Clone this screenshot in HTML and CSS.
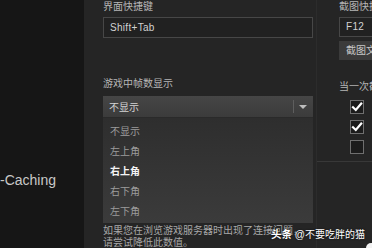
FILE: index.html
```html
<!DOCTYPE html>
<html lang="zh-CN">
<head>
  <meta charset="UTF-8" />
  <meta name="viewport" content="width=device-width, initial-scale=1.0" />
  <title>游戏内设置</title>
  <link rel="stylesheet" href="styles.css">
</head>
<body>

  <div class="page">
    <div class="sidebar">
      <div class="sidebar-item">-Caching</div>
    </div>

    <div class="content">
      <div class="col-main">
        <div class="label">界面快捷键</div>
        <div class="field">Shift+Tab</div>

        <div class="label label-gap">游戏中帧数显示</div>
        <div class="select">
          <span class="select-value">不显示</span>
          <span class="select-sep"></span>
          <span class="select-arrow"></span>
        </div>
        <ul class="options">
          <li>不显示</li>
          <li>左上角</li>
          <li class="selected">右上角</li>
          <li>右下角</li>
          <li>左下角</li>
        </ul>

        <p class="note">如果您在浏览游戏服务器时出现了连接问题，<br>请尝试降低此数值。</p>
      </div>

      <div class="col-side">
        <div class="side-inner">
          <div class="label">截图快捷键</div>
          <div class="field field-wide">F12</div>
          <div class="button">截图文件夹</div>

          <div class="label label-gap-sm">当一次截图时</div>
          <div class="checks">
            <span class="check on">
              <svg width="12" height="12" viewBox="0 0 12 12"><path d="M2 6.2 L4.8 9 L10.2 2.6" fill="none" stroke="#fff" stroke-width="2.2" stroke-linecap="square"/></svg>
            </span>
            <span class="check on">
              <svg width="12" height="12" viewBox="0 0 12 12"><path d="M2 6.2 L4.8 9 L10.2 2.6" fill="none" stroke="#fff" stroke-width="2.2" stroke-linecap="square"/></svg>
            </span>
            <span class="check"></span>
          </div>
        </div>
        <div class="side-divider"></div>
      </div>
    </div>
  </div>

  <div class="watermark"><b>头条</b> @不要吃胖的猫</div>
  <div class="corner-dot"></div>

</body>
</html>
```

FILE: styles.css
```css
body {
  margin: 0;
  padding: 0;
  width: 372px;
  height: 248px;
  overflow: hidden;
  position: relative;
  background: #252525;
  font-family: "Liberation Sans", "Noto Sans CJK SC", sans-serif;
  font-size: 10px;
  color: #b4b4b4;
}

.page {
  display: flex;
  height: 248px;
}

.sidebar {
  width: 84px;
  flex-shrink: 0;
  background: #161616;
  padding-top: 172px;
  box-sizing: border-box;
}

.sidebar-item {
  font-size: 14px;
  line-height: 16px;
  color: #c8c8c8;
  white-space: nowrap;
}

.content {
  flex: 1;
  display: flex;
  padding-left: 19px;
}

.col-main {
  width: 210px;
  flex-shrink: 0;
}

.label {
  margin-top: 1px;
  line-height: 12px;
  height: 12px;
  white-space: nowrap;
  color: #b6b6b6;
}

.label-gap {
  margin-top: 40px;
}

.label-gap-sm {
  margin-top: 21px;
}

.field {
  margin-top: 4px;
  height: 21px;
  box-sizing: border-box;
  border: 1px solid #474747;
  background: #212121;
  padding-left: 6px;
  line-height: 19px;
  font-size: 10px;
  color: #d2d2d2;
  letter-spacing: 0.3px;
}

.field-wide {
  width: 60px;
  height: 20px;
  line-height: 18px;
}

.button {
  margin-top: 4px;
  width: 60px;
  height: 19px;
  background: #3b3b3b;
  padding-left: 7px;
  line-height: 19px;
  color: #c8c8c8;
  white-space: nowrap;
}

.select {
  margin-top: 6px;
  height: 21px;
  display: flex;
  align-items: center;
  background: linear-gradient(#464646, #3b3b3b);
  padding-left: 6px;
  color: #d4d4d4;
}

.select-value {
  flex: 1;
}

.select-sep {
  width: 1px;
  height: 13px;
  background: #5e5e5e;
}

.select-arrow {
  width: 0;
  height: 0;
  margin: 1px 6px 0 5px;
  border-left: 4px solid transparent;
  border-right: 4px solid transparent;
  border-top: 4px solid #bdbdbd;
}

.options {
  list-style: none;
  margin: 0;
  padding: 4px 0 2px;
  height: 106px;
  box-sizing: border-box;
  border-top: 1px solid #2a2a2a;
  background: linear-gradient(#2e2e2e, #3b3b3b);
}

.options li {
  height: 20px;
  line-height: 20px;
  padding-left: 7px;
  color: #9c9c9c;
}

.options li.selected {
  color: #f4f4f4;
  font-weight: bold;
}

.note {
  margin: 2px 0 0;
  line-height: 12px;
  color: #a8a8a8;
  white-space: nowrap;
}

.col-side {
  width: 56px;
  margin-left: 3px;
  flex-shrink: 0;
  overflow: hidden;
  border-left: 1px solid #2c2c2c;
}

.side-inner {
  padding-left: 22px;
}

.checks {
  margin-top: 7px;
  padding-left: 11px;
  display: flex;
  flex-direction: column;
  gap: 6px;
}

.check {
  width: 14px;
  height: 14px;
  box-sizing: border-box;
  border: 1px solid #6f6f6f;
  background: #1c1c1c;
  display: flex;
  align-items: center;
  justify-content: center;
}

.side-divider {
  margin-top: 7px;
  height: 1px;
  background: #383838;
}

.watermark {
  position: absolute;
  right: 7px;
  bottom: 7px;
  line-height: 12px;
  font-size: 10px;
  color: #fff;
  text-shadow: 0 0 2px rgba(0,0,0,0.8);
  white-space: nowrap;
}

.watermark b {
  font-size: 10.5px;
}

.corner-dot {
  position: absolute;
  right: -4px;
  bottom: -5px;
  width: 10px;
  height: 10px;
  border-radius: 50%;
  background: #f2f2f2;
}
```
